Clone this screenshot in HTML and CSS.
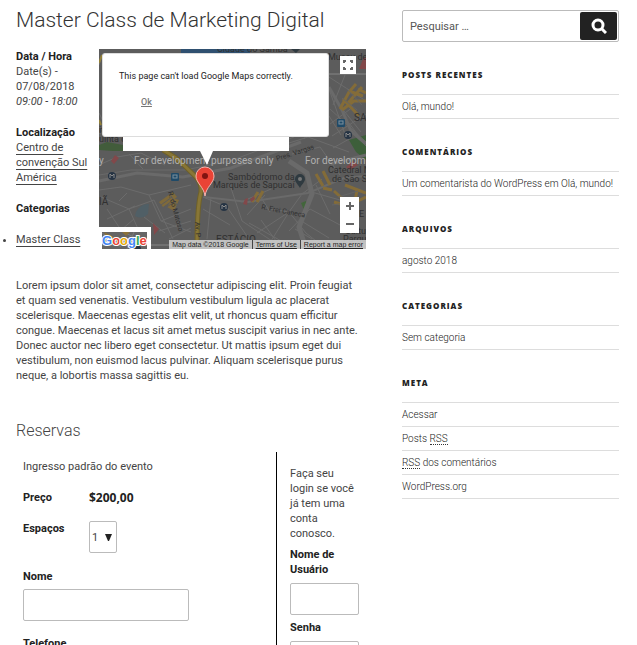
FILE: index.html
```
<!DOCTYPE html>
<html lang="pt-BR">
<head>
<meta charset="utf-8">
<title>Master Class de Marketing Digital</title>
<link rel="stylesheet" href="styles.css">
</head>
<body>
<div class="page">
<main class="content">
  <h1 class="entry-title">Master Class de Marketing Digital</h1>

  <div class="event">
    <div class="details">
      <p><strong>Data / Hora</strong><br>Date(s) - 07/08/2018<br><em>09:00 - 18:00</em></p>
      <p><strong>Localização</strong><br><a href="#">Centro de convenção Sul América</a></p>
      <p><strong>Categorias</strong></p>
      <ul><li><a href="#">Master Class</a></li></ul>
    </div>

    <div class="map">
      <svg class="map-canvas" viewBox="0 0 267 200" preserveAspectRatio="xMidYMid slice" aria-hidden="true">
        <defs>
          <clipPath id="logo-area"><rect x="3" y="183" width="45" height="17"/></clipPath>
        </defs>
        <rect width="267" height="200" fill="#5c5c5c"/>
        <!-- water and parks -->
        <path d="M82 0H151V4H82Z" fill="#2f5070"/>
        <path d="M0 96L8 93L24 96V102H14L0 101Z" fill="#425c3b"/>
        <path d="M250 91L267 86V111L257 103Z" fill="#3d5f3a"/>
        <path d="M37 163Q42 154 50 155L49 165Q43 171 36 167Z" fill="#505f66"/>
        <path d="M202 154L207 152L210 158L205 161Z" fill="#42663b"/>
        <!-- minor streets -->
        <g fill="none" stroke="#6c6c6c" stroke-width="1">
          <path d="M0 141L22 138L50 146L92 136M2 148L30 160L55 151M8 160L22 181L35 170M30 160L40 182M20 152L28 144M50 146L62 172L92 183M55 151L74 190M62 172L92 160M60 182L92 172M70 190L92 179M45 168L66 184M8 170L36 157M0 116L18 108L42 104L66 116M30 105L44 120"/>
          <path d="M104 148L128 158L150 190M104 160L131 176M112 148L108 190M131 136L143 172L173 192M148 166L166 146M162 171L177 192M158 184L190 163L207 184L222 196M172 160L190 163L203 145L223 130M172 192L190 163M190 182L211 160L241 176M209 142L241 151M217 136L231 165M204 173L230 189M142 153L172 140M150 174L184 193M160 145L171 163M196 180L213 190"/>
          <path d="M190 94L209 88L250 103M193 105L221 98L241 126M205 90L213 76L230 67L242 86M230 40L247 88M231 60L267 93M237 52L262 83M231 75L254 58M233 87L267 65M230 28L267 52M246 26L234 56M250 74L267 97M234 99L252 89M0 16L4 4M0 64L4 72M0 84H26"/>
        </g>
        <!-- railway and avenues -->
        <g fill="none" stroke="#6a6a6a">
          <path d="M0 132L38 124L84 128L132 119L202 93" stroke-width="3"/>
          <path d="M0 126L32 121L86 121L131 112L195 88" stroke-width="1"/>
          <path d="M105 148L149 153L209 144L245 129L267 127" stroke-width="2"/>
          <path d="M190 112L208 124L213 145L200 178L207 200" stroke-width="5"/>
          <path d="M230 38L243 61L252 82L267 95M232 115L267 106" stroke-width="3"/>
          <path d="M190 25H267" stroke="#858585"/>
          <path d="M52 196H92" stroke="#858585"/>
        </g>
        <!-- highlighted blocks -->
        <path d="M60 153L74 143L78 148L64 158ZM68 158L74 149L80 151L75 162Z" fill="#7f6a3b"/>
        <path d="M62 156L73 148M65 160L75 153M70 144L78 156" stroke="#5c5c5c"/>
        <g fill="none" stroke="#846c38" stroke-width="3">
          <path d="M153 153L159 143M158 153L164 142M217 125L224 137M224 122L231 136M224 139L233 141M235 142L257 162M246 136L267 144M235 153L252 158M248 157L267 148M258 141L254 164"/>
          <path d="M241 60L250 43L257 35M243 61L255 52L267 52M250 42L264 47M249 54L263 38M244 50L260 67M259 40L267 44"/>
        </g>
        <g fill="none" stroke="#656565"><path d="M247 39L263 56M243 49L258 61M239 148L259 142M233 156L260 152"/></g>
        <path d="M12 112L16 106L20 109L15 115ZM54 174L60 180L55 186ZM144 155L146 150L149 149L148 156ZM151 150L155 147L156 150L152 153ZM260 20L265 8L267 9V20ZM247 118L254 112L259 116L251 121Z" fill="#82484a"/>
        <!-- yellow avenue -->
        <path d="M64 101L77 109Q87 118 96 127Q103 134 102 143Q98 157 98 200" fill="none" stroke="#6f6129" stroke-width="5"/>
        <path d="M64 101L77 109Q87 118 96 127Q103 134 102 143Q98 157 98 200" fill="none" stroke="#887636" stroke-width="3"/>
        <path d="M0 14L3 6M0 71L2 76" stroke="#938037" stroke-width="2"/>
        <!-- transit stops -->
        <g fill="#263444">
          <circle cx="13" cy="127" r="4"/><circle cx="125" cy="158" r="4"/><circle cx="249" cy="86" r="4"/><circle cx="38" cy="200" r="4"/>
        </g>
        <path d="M11 129V125L13 127L15 125V129M123 160V156L125 158L127 156V160M247 88V84L249 86L251 84V88" fill="none" stroke="#8a8a8a"/>
        <g fill="#1f4a68"><rect x="72" y="124" width="8" height="8" rx="1"/><rect x="238" y="70" width="8" height="8" rx="1"/></g>
        <g fill="none" stroke="#7c909d"><rect x="74" y="126" width="4" height="3"/><rect x="240" y="72" width="4" height="3"/></g>
        <path d="M201 139C198 134 196 133 196 130A5 5 0 0 1 206 130C206 133 203 135 201 139Z" fill="#2f3a40"/>
        <circle cx="201" cy="130" r="2" fill="#777"/>
        <path d="M192 0H201L197 4Z" fill="#2f3a40"/>
        <!-- place names -->
        <g class="place">
          <text x="129" y="131">Sambódromo da</text>
          <text x="114" y="139">Marquês de Sapucaí</text>
          <text x="229" y="124">Catedral M</text>
          <text x="233" y="133">de São S</text>
          <text x="229" y="11">Museu de</text>
          <text x="118" y="3">Cidade do Samba</text>
          <text x="0" y="93">uinta da</text>
          <text x="0" y="84">it</text>
          <text x="246" y="185">Cultu</text>
          <text x="244" y="193">Parque</text>
          <text x="260" y="168">E</text>
          <text class="district" x="0" y="156">IÃ</text>
          <text class="district" x="255" y="72">SA</text>
          <text class="district" x="117" y="194">ESTÁCIO</text>
          <text class="street" transform="translate(162 160) rotate(11)">R. Frei Caneca</text>
          <text class="street" transform="translate(178 112) rotate(-18)">Pres. Vargas</text>
          <text class="street" transform="translate(69 143) rotate(75)">R. do Matoso</text>
          <text class="street" transform="translate(96 173) rotate(86)">Av. P</text>
        </g>
        <g class="watermark">
          <text x="0" y="115">y</text>
          <text x="35" y="115">For development purposes only</text>
          <text x="206" y="115">For developm</text>
        </g>
        <!-- info window with its tail -->
        <path d="M24 80H190V102H114L108 116L101 102H24Z" fill="#fff"/>
        <!-- marker -->
        <path d="M106 147C105 138 97 134 97 127A9 9 0 0 1 115 127C115 134 107 138 106 147Z" fill="#ea4335" stroke="#f7b4ae"/>
        <circle cx="106" cy="127" r="3" fill="#811411"/>
        <!-- logo plate -->
        <path d="M0 178H52V200H0Z" fill="#fff"/>
        <g clip-path="url(#logo-area)">
          <rect x="3" y="183" width="45" height="17" fill="#656565"/>
          <path d="M3 184L22 198M24 183L48 194M3 196H48M35 183L28 200" stroke="#7b7b7b"/>
          <path d="M5 183L17 189L10 194ZM23 183L31 183L27 187Z" fill="#8b7138"/>
          <circle cx="38" cy="200" r="4" fill="#263444"/>
        </g>
        <text class="logo" x="3" y="196"><tspan fill="#4285f4">G</tspan><tspan fill="#ea4335">o</tspan><tspan fill="#e5ab08">o</tspan><tspan fill="#4285f4">g</tspan><tspan fill="#34a853">l</tspan><tspan fill="#ea4335">e</tspan></text>
      </svg>
      <div class="map-dialog">
        <p>This page can't load Google Maps correctly.</p>
        <button type="button">Ok</button>
      </div>
      <button class="map-button fullscreen" type="button" aria-label="Fullscreen">
        <svg viewBox="0 0 12 12" width="12" height="12"><path d="M2 4V2H4M8 2H10V4M10 8V10H8M4 10H2V8" fill="none" stroke="#666" stroke-width="2"/></svg>
      </button>
      <div class="zoom">
        <button class="map-button" type="button" aria-label="Zoom in"><svg viewBox="0 0 8 8" width="8" height="8"><path d="M0 4H8M4 0V8" stroke="#666" stroke-width="2"/></svg></button>
        <button class="map-button" type="button" aria-label="Zoom out"><svg viewBox="0 0 8 8" width="8" height="8"><path d="M0 4H8" stroke="#666" stroke-width="2"/></svg></button>
      </div>
      <div class="credits"><span>Map data ©2018 Google</span><a href="#">Terms of Use</a><a href="#">Report a map error</a></div>
    </div>
  </div>

  <p class="description">Lorem ipsum dolor sit amet, consectetur adipiscing elit. Proin feugiat et quam sed venenatis. Vestibulum vestibulum ligula ac placerat scelerisque. Maecenas egestas elit velit, ut rhoncus quam efficitur congue. Maecenas et lacus sit amet metus suscipit varius in nec ante. Donec auctor nec libero eget consectetur. Ut mattis ipsum eget dui vestibulum, non euismod lacus pulvinar. Aliquam scelerisque purus neque, a lobortis massa sagittis eu.</p>

  <h2 class="section-title">Reservas</h2>

  <div class="booking">
    <form class="ticket-form">
      <p>Ingresso padrão do evento</p>
      <div class="field-row"><strong>Preço</strong><strong class="price">$200,00</strong></div>
      <div class="field-row">
        <label for="spaces">Espaços</label>
        <span class="select"><select id="spaces"><option>1</option><option>2</option></select><svg viewBox="0 0 7 7" width="7" height="7" aria-hidden="true"><path d="M0 0H7L4 7H3Z" fill="#222"/></svg></span>
      </div>
      <div class="field"><label for="name">Nome</label><input id="name" type="text"></div>
      <div class="field"><label for="phone">Telefone</label><input id="phone" type="tel"></div>
    </form>
    <form class="login-form">
      <p>Faça seu login se você já tem uma conta conosco.</p>
      <label for="user">Nome de Usuário</label><input id="user" type="text">
      <label for="pass">Senha</label><input id="pass" type="password">
    </form>
  </div>
</main>

<aside class="sidebar">
  <form class="search">
    <input type="search" aria-label="Pesquisar" placeholder="Pesquisar …">
    <button type="submit" aria-label="Pesquisar"><svg viewBox="0 0 16 16" width="16" height="16"><circle cx="7" cy="7" r="5" fill="none" stroke="#fff" stroke-width="3"/><path d="M10 10L15 15" stroke="#fff" stroke-width="3"/></svg></button>
  </form>
  <section><h2>Posts recentes</h2><ul><li><a href="#">Olá, mundo!</a></li></ul></section>
  <section><h2>Comentários</h2><ul><li><a href="#">Um comentarista do WordPress</a> em <a href="#">Olá, mundo!</a></li></ul></section>
  <section><h2>Arquivos</h2><ul><li><a href="#">agosto 2018</a></li></ul></section>
  <section><h2>Categorias</h2><ul><li><a href="#">Sem categoria</a></li></ul></section>
  <section><h2>Meta</h2><ul>
    <li><a href="#">Acessar</a></li>
    <li><a href="#">Posts <abbr>RSS</abbr></a></li>
    <li><a href="#"><abbr>RSS</abbr> dos comentários</a></li>
    <li><a href="#">WordPress.org</a></li>
  </ul></section>
</aside>
</div>
</body>
</html>
```
FILE: styles.css
```
* { box-sizing: border-box; }

body {
  margin: 0;
  background: #fff;
  color: #444;
  font: 11px/15px Roboto, "Liberation Sans", sans-serif;
}

h1, h2, p, ul { margin: 0; padding: 0; }
button, input, select { font: inherit; color: inherit; margin: 0; }
strong, label { font-weight: 700; color: #222; }

.page {
  display: grid;
  grid-template-columns: 350fr 217fr;
  gap: 36px;
  height: 100vh;
  overflow: hidden;
  padding: 0 18px 0 16px;
}

.content { padding-top: 6px; min-width: 0; }

.entry-title {
  margin-bottom: 15px;
  color: #333;
  font-size: 21px;
  font-weight: 300;
  line-height: 28px;
}

/* Event summary */
.event { display: grid; grid-template-columns: 75fr 267fr; gap: 8px; }
.details p { margin-bottom: 16px; }
.details a { color: #444; text-decoration: underline; text-underline-offset: 3px; }

.map { position: relative; height: 200px; overflow: hidden; font-size: 9px; }
.map-canvas { display: block; width: 100%; height: 100%; }
.place { fill: #303030; font-size: 9px; }
.street { font-size: 7px; }
.district { font-size: 10px; }
.watermark { fill: #b0b0b0; font-size: 10px; }
.logo {
  font: 700 13px "Liberation Sans", sans-serif;
  stroke: #fff;
  stroke-width: 2px;
  paint-order: stroke;
}

.map-dialog {
  position: absolute;
  top: 4px;
  left: 3px;
  width: 227px;
  height: 84px;
  padding: 16px;
  border: 1px solid #ddd;
  border-radius: 3px;
  background: #fff;
  color: #222;
  line-height: 12px;
}
.map-dialog button {
  display: block;
  margin: 14px 22px;
  padding: 0;
  border: 0;
  background: none;
  color: #777;
  font-weight: 500;
  text-decoration: underline;
}

.map-button {
  display: grid;
  place-items: center;
  width: 19px;
  height: 18px;
  padding: 0;
  border: 0;
  background: #fff;
}
.fullscreen { position: absolute; top: 7px; right: 10px; width: 16px; }
.zoom { position: absolute; right: 7px; bottom: 16px; }

.credits {
  position: absolute;
  right: 0;
  bottom: 0;
  display: flex;
  background: rgb(205 205 205 / 90%);
  color: #222;
  font-family: "Liberation Sans", sans-serif;
  font-size: 7px;
  line-height: 9px;
  white-space: nowrap;
}
.credits > * { padding: 0 3px; color: inherit; }
.credits a { border-left: 1px solid #444; }

.description { margin-top: 29px; padding-right: 8px; }

.section-title {
  margin: 37px 0 10px;
  font-size: 16px;
  font-weight: 300;
  line-height: 22px;
}

/* Booking */
.booking { display: grid; grid-template-columns: 261fr 89fr; }
.booking input {
  display: block;
  width: 100%;
  height: 32px;
  padding: 4px 8px;
  border: 1px solid #bbb;
  border-radius: 2px;
  background: #fff;
}
.booking label { display: block; }

.ticket-form { padding: 7px; border-right: 1px solid #000; }
.ticket-form p { margin-bottom: 16px; }
.field-row {
  display: grid;
  grid-template-columns: 66px 1fr;
  margin-bottom: 16px;
}
.field { width: 166px; margin-bottom: 15px; }
.field label { margin-bottom: 5px; }
.price { font-family: "Open Sans", sans-serif; font-size: 12px; }

.select { position: relative; width: 28px; }
.select select {
  display: block;
  width: 28px;
  height: 32px;
  padding: 0 2px;
  border: 1px solid #bbb;
  border-radius: 2px;
  background: #fff;
  appearance: none;
}
.select svg { position: absolute; right: 5px; top: 13px; pointer-events: none; }

.login-form { padding: 14px 7px 0 13px; }
.login-form p { margin-bottom: 6px; }
.login-form label { margin-bottom: 6px; }
.login-form input { margin-bottom: 5px; }

/* Sidebar */
.sidebar { padding-top: 10px; font-size: 10px; font-weight: 300; min-width: 0; }

.search {
  display: flex;
  height: 32px;
  padding: 1px;
  border: 1px solid #bbb;
  border-radius: 2px;
}
.search input {
  flex: 1;
  min-width: 0;
  padding: 0 6px;
  border: 0;
  font-size: 11px;
  font-weight: 400;
}
.search input::placeholder { color: #555; opacity: 1; }
.search button {
  display: grid;
  place-items: center;
  width: 37px;
  padding: 0;
  border: 0;
  border-radius: 2px;
  background: #222;
}

.sidebar section { margin-top: 26px; }
.sidebar h2 {
  margin-bottom: 12px;
  color: #222;
  font-family: "Open Sans", sans-serif;
  font-size: 8px;
  font-weight: 800;
  line-height: 14px;
  letter-spacing: 1px;
  text-transform: uppercase;
}
.sidebar ul { list-style: none; border-top: 1px solid #ddd; }
.sidebar li {
  height: 24px;
  border-bottom: 1px solid #ddd;
  color: #222;
  line-height: 24px;
  white-space: nowrap;
}
.sidebar a { color: #222; text-decoration: none; }
.sidebar abbr { border-bottom: 1px dotted #333; text-decoration: none; }
```
